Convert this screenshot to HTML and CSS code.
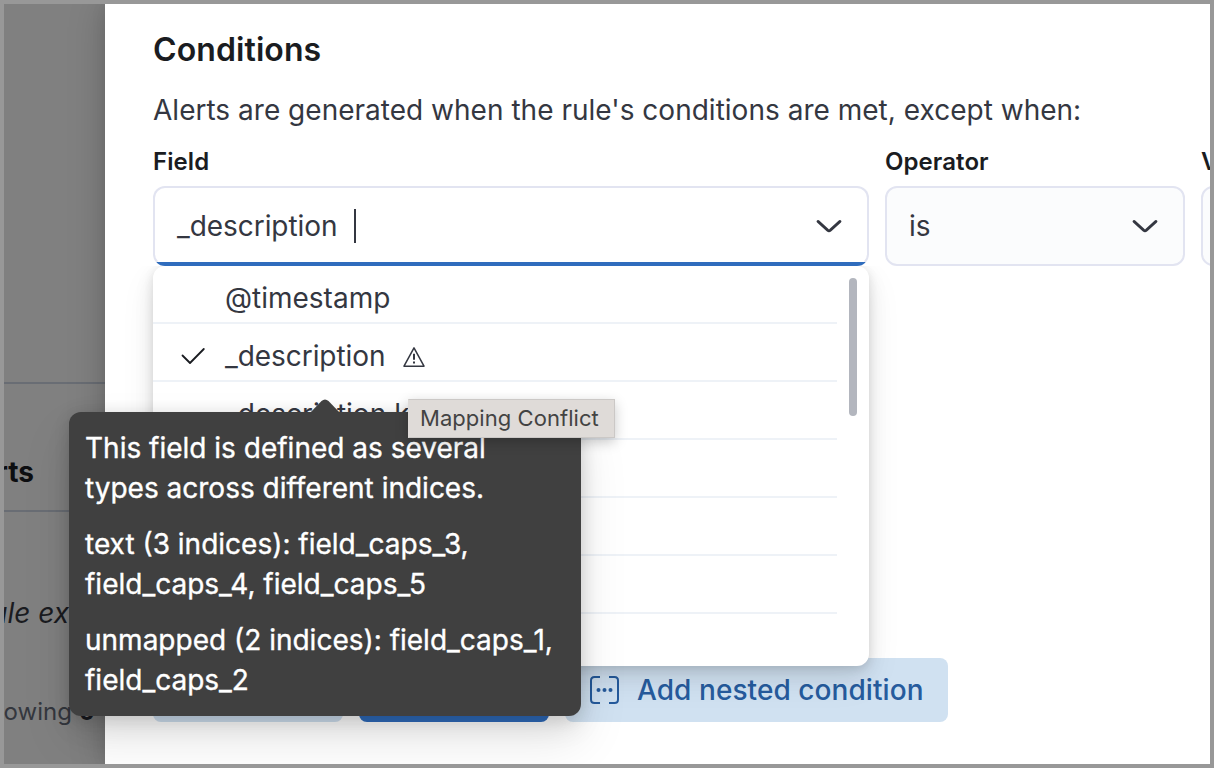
FILE: index.html
```html
<!DOCTYPE html>
<html lang="en">
<head>
<meta charset="utf-8">
<title>Add rule exception</title>
<link rel="stylesheet" href="styles.css">
</head>
<body>
<div class="frame">
  <aside class="backdrop">
    <div class="tab-label"><span>Alerts</span></div>
    <div class="tab-body">
      <p class="empty-note">Rule exce</p>
      <p class="count">Showing <b>0</b></p>
    </div>
  </aside>
  <main class="flyout">
    <h2 class="title">Conditions</h2>
    <p class="intro">Alerts are generated when the rule's conditions are met, except when:</p>
    <div class="fields">
      <div class="field field-main">
        <label class="label">Field</label>
        <div class="combo combo-open">
          <span class="value">_description</span><span class="caret"></span>
          <svg class="chevron" width="28" height="16" viewBox="0 0 28 16"><path d="M3 3.4 12.6 12.1Q14 13.3 15.4 12.1L25 3.4"/></svg>
        </div>
        <div class="list">
          <ul class="options">
            <li class="option"><span class="mark"></span>@timestamp</li>
            <li class="option"><span class="mark"><svg width="26" height="18" viewBox="0 0 26 18"><path d="M2.5 8.5 10 16 23.8 2"/></svg></span><span class="name">_description</span><svg class="warn" width="22" height="21" viewBox="0 0 22 21"><path d="M11 1.8 21 20.2H1Z"/><path class="bang" d="M11 7.8v6M11 15.5v2"/></svg></li>
            <li class="option"><span class="mark"></span>_description.keyword</li>
            <li class="option"></li>
            <li class="option"></li>
            <li class="option"></li>
          </ul>
          <span class="thumb"></span>
        </div>
        <div class="native-tip">Mapping Conflict</div>
      </div>
      <div class="field field-operator">
        <label class="label">Operator</label>
        <div class="combo"><span class="value">is</span>
          <svg class="chevron" width="28" height="16" viewBox="0 0 28 16"><path d="M3 3.4 12.6 12.1Q14 13.3 15.4 12.1L25 3.4"/></svg>
        </div>
      </div>
      <div class="field field-value">
        <label class="label">Value</label>
        <div class="combo"></div>
      </div>
    </div>
    <div class="buttons">
      <span class="btn btn-and">AND</span>
      <span class="btn btn-or">OR</span>
      <span class="btn btn-nested">
        <svg width="30" height="30" viewBox="0 0 30 30"><path d="M10 2H4.5Q1 2 1 5.5V24.500Q1 28 4.500 28H10M19 2H24.500Q28 2 28 5.500V24.500Q28 28 24.500 28H19"/><circle cx="8.500" cy="15" r="2"/><circle cx="14.500" cy="15" r="2"/><circle cx="20.500" cy="15" r="2"/></svg>
        <span class="btn-text">Add nested condition</span>
      </span>
    </div>
  </main>
  <div class="tooltip">
    <svg class="arrow" width="32" height="16" viewBox="0 0 32 16"><path d="M0 16 12.5 3Q16 0 19.5 3L32 16Z"/></svg>
    <p>This field is defined as several<br>types across different indices.</p>
    <p>text (3 indices): field_caps_3,<br>field_caps_4, field_caps_5</p>
    <p>unmapped (2 indices): field_caps_1,<br>field_caps_2</p>
  </div>
</div>
</body>
</html>
```
FILE: styles.css
```css
* { box-sizing: border-box; }
body { margin: 0; font-family: Inter, "Liberation Sans", sans-serif; color: #343741; }
p, h2, ul { margin: 0; padding: 0; }

.frame { position: relative; display: flex; width: 1214px; height: 768px; border: 4px solid #989898; overflow: hidden; background: #808080; }

.backdrop { width: 101px; flex: none; overflow: hidden; padding-top: 378px; }
.tab-label { height: 130px; border-top: 2px solid #696d74; border-bottom: 2px solid #696d74; display: flex; justify-content: flex-end; align-items: center; padding: 50px 71px 0 0; font-size: 28px; font-weight: 700; color: #0d0e11; white-space: nowrap; }
.tab-body { height: 252px; padding-top: 80px; white-space: nowrap; }
.empty-note { margin-left: -31px; font-size: 28px; line-height: 42px; font-style: italic; color: #1a1b20; }
.count { margin: 58px 0 0 -30px; font-size: 24px; line-height: 40px; color: #34373e; }
.count b { color: #1a1b20; }

.flyout { flex: none; width: 1105px; height: 760px; background: #fff; padding: 26px 0 0 48px; box-shadow: 0 0 36px rgba(0,0,0,.2), 0 0 14px rgba(0,0,0,.08); }
.title { font-size: 32px; line-height: 40px; font-weight: 600; letter-spacing: .1px; color: #1a1c21; }
.intro { margin-top: 20px; font-size: 28px; line-height: 40px; letter-spacing: .015px; white-space: nowrap; }
.fields { display: flex; gap: 16px; margin-top: 16px; height: 510px; }
.field { flex: none; position: relative; width: 300px; }
.field-main { width: 716px; }
.label { display: block; height: 40px; line-height: 32px; font-size: 24px; font-weight: 600; letter-spacing: .08px; color: #1a1c21; }
.combo { display: flex; align-items: center; height: 80px; border: 2px solid #e2e4f1; border-radius: 12px; background: #fbfcfd; padding: 0 24px 0 22px; font-size: 28px; }
.combo-open { background: linear-gradient(to top, #2f6cbd 4px, #fff 4px); background-origin: border-box; background-clip: border-box; border-bottom-color: transparent; }
.combo-open .value, .name { letter-spacing: -.06px; }
.chevron { margin-left: auto; fill: none; stroke: #343741; stroke-width: 2.8; stroke-linecap: round; }
.caret { width: 2px; height: 34px; margin-left: 16.500px; background: #343741; }

.list { position: relative; height: 400px; border-radius: 12px; background: #fff; box-shadow: 0 2px 10px rgba(0,0,0,.1), 0 8px 20px rgba(0,0,0,.09), 0 14px 36px rgba(0,0,0,.07); clip-path: inset(0 -70px -70px -70px); }
.options { width: 684px; list-style: none; }
.option { display: flex; align-items: center; height: 58px; border-bottom: 2px solid #eef2f7; padding: 8px 0 0 27px; font-size: 28px; white-space: nowrap; }
.mark { display: flex; width: 45px; }
.mark path { fill: none; stroke: #1a1c21; stroke-width: 1.8; stroke-linecap: round; stroke-linejoin: round; }
.warn { margin-left: 18px; fill: none; stroke: #343741; stroke-width: 1.5; stroke-linejoin: round; }
.bang { stroke-width: 2; }
.thumb { position: absolute; right: 12px; top: 12px; width: 8px; height: 138px; border-radius: 4px; background: #b3b6be; }

.buttons { display: flex; gap: 16px; margin-top: 2px; }
.btn { display: flex; align-items: center; height: 64px; border-radius: 8px; justify-content: center; width: 190px; background: #d0e1f1; color: #265b9d; font-size: 28px; font-weight: 500; white-space: nowrap; }
.btn-or { background: #2f6cbd; color: #fff; }
.btn-nested { width: 383px; justify-content: flex-start; padding-left: 25px; gap: 17px; letter-spacing: .07px; }
.btn-nested path { fill: none; stroke: #265b9d; stroke-width: 2; }
.btn-nested circle { fill: #265b9d; }

.tooltip { position: absolute; z-index: 5; left: 65px; top: 408px; width: 512px; height: 304px; padding: 16px; border-radius: 12px; background: #404040; color: #fff; font-size: 28px; line-height: 40px; -webkit-text-stroke: .35px #fff; white-space: nowrap; box-shadow: 0 2px 16px rgba(0,0,0,.12), 0 12px 26px rgba(0,0,0,.08), 0 24px 50px rgba(0,0,0,.1); }
.tooltip p + p { margin-top: 16px; }
.arrow { position: absolute; left: 240px; top: -14px; fill: #404040; }

.native-tip { position: absolute; z-index: 8; left: 255px; top: 253px; width: 207px; height: 39px; padding-left: 11px; line-height: 36px; font-size: 22px; letter-spacing: .05px; color: #434343; background: #dfdbd8; border: 1px solid #cbc8c6; border-left-color: #dfdbd8; white-space: nowrap; box-shadow: 0 4px 12px rgba(0,0,0,.22); }
```
